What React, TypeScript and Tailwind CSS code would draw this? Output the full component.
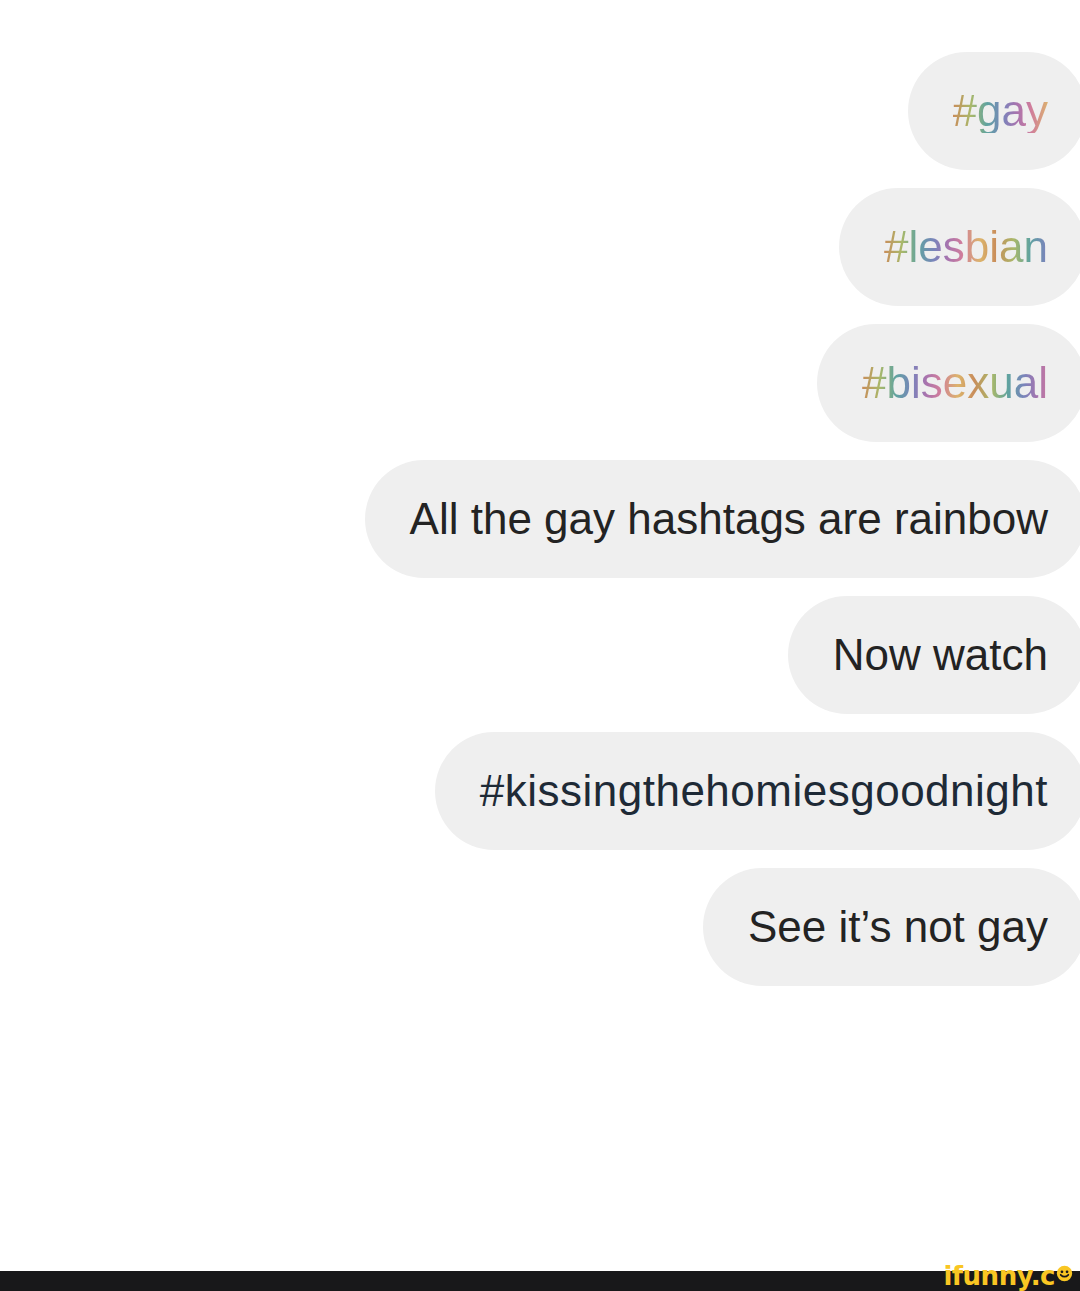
import React from "react";

const rainbow =
  "bg-[repeating-linear-gradient(90deg,#c98d5a_0px,#a9b86a_18px,#5fa3a0_34px,#7a84bb_50px,#a873ae_64px,#d07d9c_78px,#dcb46c_96px,#c98d5a_112px)] bg-clip-text text-transparent";

type Msg = { text: string; kind: "rainbow" | "plain" | "tag" };

const messages: Msg[] = [
  { text: "#gay", kind: "rainbow" },
  { text: "#lesbian", kind: "rainbow" },
  { text: "#bisexual", kind: "rainbow" },
  { text: "All the gay hashtags are rainbow", kind: "plain" },
  { text: "Now watch", kind: "plain" },
  { text: "#kissingthehomiesgoodnight", kind: "tag" },
  { text: "See it\u2019s not gay", kind: "plain" },
];

function Bubble({ m }: { m: Msg }) {
  const textCls =
    m.kind === "rainbow"
      ? rainbow
      : m.kind === "tag"
      ? "text-[#1e2a36] tracking-[0.5px]"
      : "text-[#232323]";
  return (
    <div className="flex h-[118px] items-center rounded-full bg-[#efefef] pl-[45px] pr-[38px] -mr-[6px]">
      <span className={`text-[44px] leading-none whitespace-nowrap ${textCls}`}>{m.text}</span>
    </div>
  );
}

export default function App() {
  return (
    <div
      className="relative h-[1291px] w-[1080px] overflow-hidden bg-white"
      style={{ fontFamily: '"Liberation Sans", Arial, sans-serif' }}
    >
      <div className="flex h-[1271px] flex-col items-end gap-[18px] pt-[52px]">
        {messages.map((m, i) => (
          <Bubble key={i} m={m} />
        ))}
      </div>
      <div className="relative h-[20px] bg-[#18181a]">
        <div className="absolute right-[7px] -top-[8px] flex items-center text-[#f9c623]">
          <span
            className="text-[26px] font-black leading-none tracking-[-0.5px]"
            style={{ fontFamily: '"DejaVu Sans", sans-serif' }}
          >
            ifunny.c
          </span>
          <svg width="17" height="17" viewBox="0 0 20 20" className="ml-[1px] -mt-[5px]">
            <circle cx="10" cy="10" r="9" fill="#f9c623" />
            <circle cx="7" cy="8" r="1.6" fill="#18181a" />
            <circle cx="13" cy="8" r="1.6" fill="#18181a" />
            <path d="M5.5 11.5 Q10 16 14.5 11.5" stroke="#18181a" strokeWidth="2" fill="none" strokeLinecap="round" />
          </svg>
        </div>
      </div>
    </div>
  );
}
